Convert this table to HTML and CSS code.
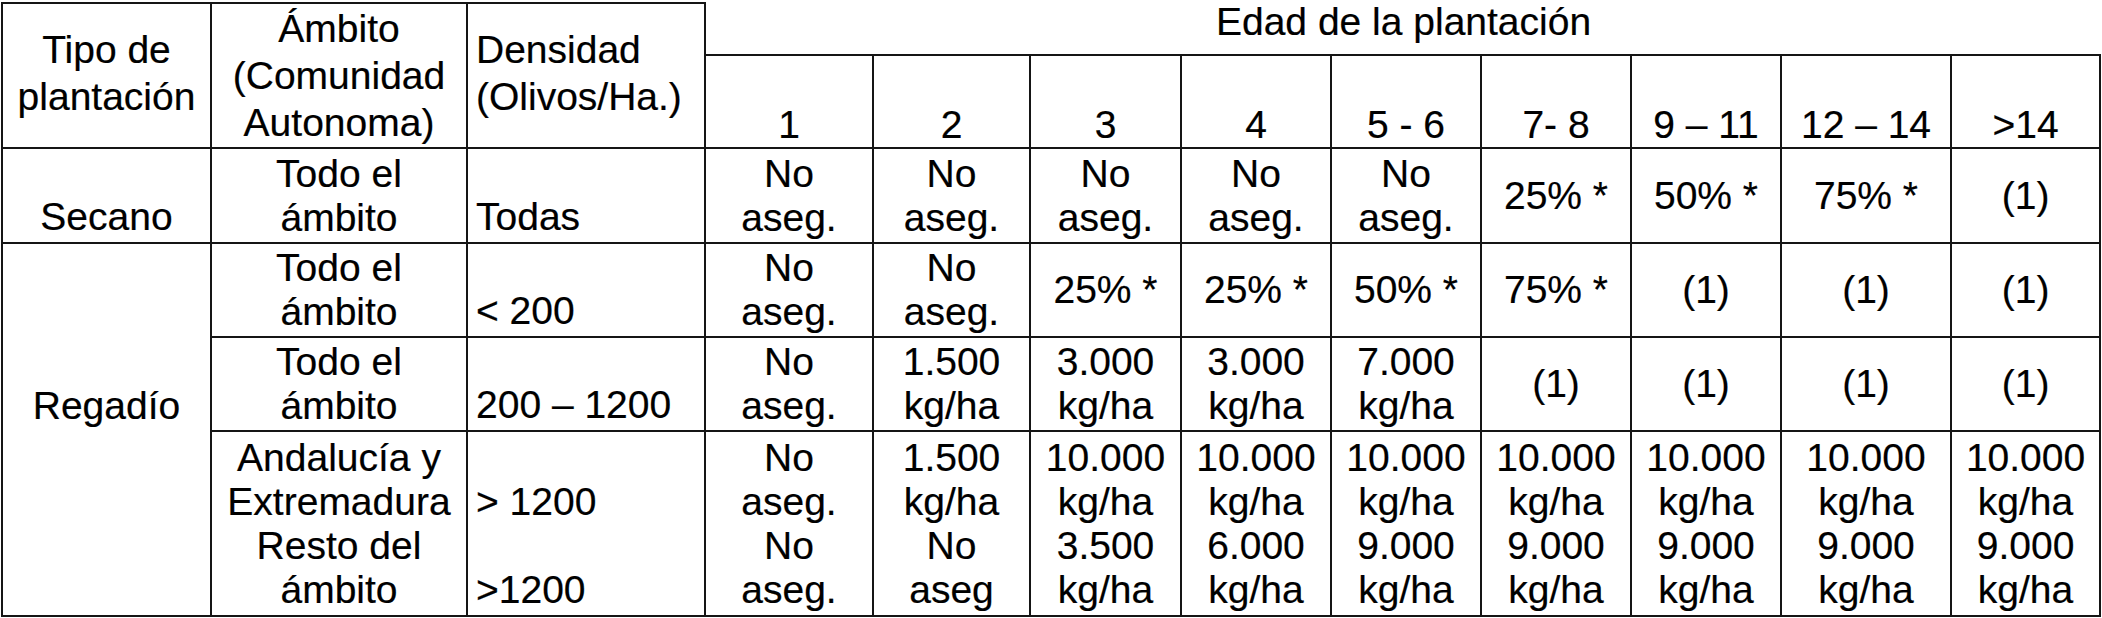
FILE: index.html
```html
<!DOCTYPE html>
<html lang="es">
<head>
<meta charset="utf-8">
<title>Edad de la plantación</title>
<link rel="stylesheet" href="styles.css">
</head>
<body>
<table class="grid">
  <colgroup>
    <col class="c-tipo">
    <col class="c-ambito">
    <col class="c-dens">
    <col class="c-e1">
    <col class="c-e2">
    <col class="c-e3">
    <col class="c-e">
    <col class="c-e">
    <col class="c-e">
    <col class="c-e">
    <col class="c-e11">
    <col class="c-e12">
  </colgroup>
  <thead>
    <tr class="r-head1">
      <th rowspan="2" class="hl first top">Tipo de<br>plantación</th>
      <th rowspan="2" class="hl hl-3 top">Ámbito<br>(Comunidad<br>Autonoma)</th>
      <th rowspan="2" class="hl top left">Densidad<br>(Olivos/Ha.)</th>
      <th colspan="9" class="edad">Edad de la plantación</th>
    </tr>
    <tr class="r-head2">
      <th class="num">1</th>
      <th class="num">2</th>
      <th class="num">3</th>
      <th class="num">4</th>
      <th class="num">5 - 6</th>
      <th class="num">7- 8</th>
      <th class="num">9 – 11</th>
      <th class="num">12 – 14</th>
      <th class="num">&gt;14</th>
    </tr>
  </thead>
  <tbody>
    <tr class="r-2">
      <td class="first bottom">Secano</td>
      <td>Todo el<br>ámbito</td>
      <td class="left bottom">Todas</td>
      <td>No<br>aseg.</td>
      <td>No<br>aseg.</td>
      <td>No<br>aseg.</td>
      <td>No<br>aseg.</td>
      <td>No<br>aseg.</td>
      <td>25% *</td>
      <td>50% *</td>
      <td>75% *</td>
      <td>(1)</td>
    </tr>
    <tr class="r-2b">
      <td rowspan="3" class="first regadio">Regadío</td>
      <td>Todo el<br>ámbito</td>
      <td class="left bottom">&lt; 200</td>
      <td>No<br>aseg.</td>
      <td>No<br>aseg.</td>
      <td>25% *</td>
      <td>25% *</td>
      <td>50% *</td>
      <td>75% *</td>
      <td>(1)</td>
      <td>(1)</td>
      <td>(1)</td>
    </tr>
    <tr class="r-2b">
      <td>Todo el<br>ámbito</td>
      <td class="left bottom">200 – 1200</td>
      <td>No<br>aseg.</td>
      <td>1.500<br>kg/ha</td>
      <td>3.000<br>kg/ha</td>
      <td>3.000<br>kg/ha</td>
      <td>7.000<br>kg/ha</td>
      <td>(1)</td>
      <td>(1)</td>
      <td>(1)</td>
      <td>(1)</td>
    </tr>
    <tr class="r-4">
      <td>Andalucía y<br>Extremadura<br>Resto del<br>ámbito</td>
      <td class="left">
        <div class="pair">&gt; 1200</div>
        <div class="pair">&gt;1200</div>
      </td>
      <td>No<br>aseg.<br>No<br>aseg.</td>
      <td>1.500<br>kg/ha<br>No<br>aseg</td>
      <td>10.000<br>kg/ha<br>3.500<br>kg/ha</td>
      <td>10.000<br>kg/ha<br>6.000<br>kg/ha</td>
      <td>10.000<br>kg/ha<br>9.000<br>kg/ha</td>
      <td>10.000<br>kg/ha<br>9.000<br>kg/ha</td>
      <td>10.000<br>kg/ha<br>9.000<br>kg/ha</td>
      <td>10.000<br>kg/ha<br>9.000<br>kg/ha</td>
      <td>10.000<br>kg/ha<br>9.000<br>kg/ha</td>
    </tr>
  </tbody>
</table>
</body>
</html>
```

FILE: styles.css
```css
html, body {
  margin: 0;
  padding: 0;
  background: #ffffff;
}

body {
  font-family: "Liberation Sans", Arial, sans-serif;
  font-size: 39px;
  line-height: 44px;
  color: #000000;
  -webkit-text-stroke: 0.2px #000000;
}

.grid {
  margin: 2px 0 0 1px;
  width: 2100px;
  table-layout: fixed;
  border-collapse: separate;
  border-spacing: 0;
}

.c-tipo { width: 211px; }
.c-ambito { width: 256px; }
.c-dens { width: 238px; }
.c-e1 { width: 168px; }
.c-e2 { width: 157px; }
.c-e3 { width: 151px; }
.c-e { width: 150px; }
.c-e11 { width: 170px; }
.c-e12 { width: 149px; }

.grid th,
.grid td {
  box-sizing: border-box;
  font-weight: normal;
  text-align: center;
  vertical-align: middle;
  white-space: nowrap;
  padding: 0 2px;
  border-right: 2px solid #151515;
  border-bottom: 2px solid #151515;
}

.grid .first { border-left: 2px solid #151515; }
.grid .top { border-top: 2px solid #151515; }

.grid .left {
  text-align: left;
  padding-left: 8px;
}

.grid .bottom {
  vertical-align: bottom;
  padding-bottom: 3px;
}

.r-head1 { height: 54px; }
.r-head2 { height: 93px; }
.r-2 { height: 95px; }
.r-2b { height: 94px; }
.r-4 { height: 185px; }

.grid .hl {
  line-height: 47px;
  padding-bottom: 6px;
}

.grid .hl-3 {
  padding-bottom: 0;
}

.grid .edad {
  border-right: none;
  vertical-align: top;
  line-height: 40px;
  padding: 0;
}

.grid .num {
  vertical-align: bottom;
  padding-bottom: 0;
}

.grid .regadio {
  vertical-align: top;
  padding-top: 140px;
}

.pair {
  height: 88px;
  display: flex;
  align-items: flex-end;
}
```
